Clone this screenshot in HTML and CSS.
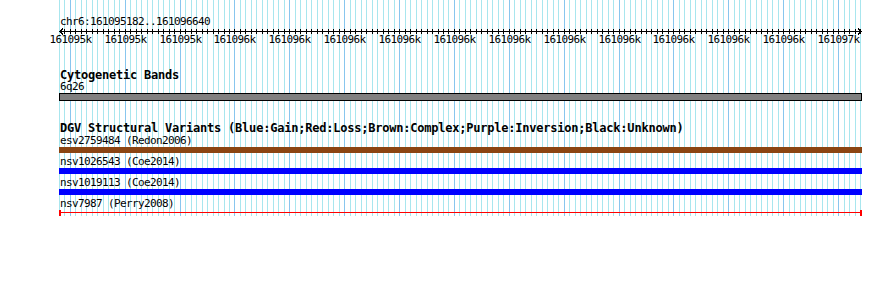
FILE: index.html
```html
<!DOCTYPE html>
<html lang="en">
<head>
    <meta charset="UTF-8">
    <title>chr6:161095182..161096640</title>
    <link rel="stylesheet" href="styles.css">
</head>
<body>

<div class="panel">
    <svg class="grid" id="grid" width="890" height="222"></svg>

    <div class="locus">chr6:161095182..161096640</div>
    <svg class="ruler" id="ruler" width="890" height="20"></svg>

    <!-- Cytogenetic bands -->
    <div class="track">
        <div class="track-title">Cytogenetic Bands</div>
        <div class="feat-label">6q26</div>
        <div class="bar band"></div>
    </div>

    <!-- DGV -->
    <div class="track dgv">
        <div class="track-title">DGV Structural Variants (Blue:Gain;Red:Loss;Brown:Complex;Purple:Inversion;Black:Unknown)</div>
        <div class="feature">
            <div class="feat-label">esv2759484 (Redon2006)</div>
            <div class="bar complex"></div>
        </div>
        <div class="feature">
            <div class="feat-label">nsv1026543 (Coe2014)</div>
            <div class="bar gain"></div>
        </div>
        <div class="feature">
            <div class="feat-label">nsv1019113 (Coe2014)</div>
            <div class="bar gain"></div>
        </div>
        <div class="feature">
            <div class="feat-label">nsv7987 (Perry2008)</div>
            <div class="bar loss"></div>
        </div>
    </div>
</div>

<script>
    const start = 161095182;
    const end = 161096640;
    const ns = 'http://www.w3.org/2000/svg';
    const grid = document.getElementById('grid');
    const ruler = document.getElementById('ruler');

    const pos = (p) => Math.round(60 + (p - start) * 0.5487);

    function add(parent, tag, attrs, text) {
        const el = document.createElementNS(ns, tag);
        for (const k in attrs) el.setAttribute(k, attrs[k]);
        if (text) el.textContent = text;
        parent.appendChild(el);
        return el;
    }

    // grid lines, every 10bp, darker every 100bp
    for (let p = 161095180; p <= end; p += 10) {
        const x = pos(p) + 0.5;
        add(grid, 'line', { x1: x, y1: 0, x2: x, y2: 222, class: p % 100 === 0 ? 'major' : 'minor' });
    }

    // ruler
    add(ruler, 'line', { x1: 60, y1: 4.5, x2: 861, y2: 4.5, class: 'axis' });
    add(ruler, 'polyline', { points: '63,1.5 60,4.5 63,7.5', class: 'axis' });
    add(ruler, 'polyline', { points: '858,1.5 861,4.5 858,7.5', class: 'axis' });

    for (let p = 161095190; p <= end; p += 10) {
        const x = pos(p) + 0.5;
        add(ruler, 'line', { x1: x, y1: 2, x2: x, y2: 7, class: 'axis' });
        if (p % 100 === 0) {
            let k = Math.round(p / 1000);
            if (p % 1000 === 500 && k % 2) k -= 1;
            add(ruler, 'text', { x: x, y: 16, class: 'tick-label' }, k + 'k');
        }
    }
</script>

</body>
</html>
```

FILE: styles.css
```css
body {
    margin: 0;
    background: #fff;
    color: #000;
    font-family: "DejaVu Sans Mono", "Liberation Mono", monospace;
}
.panel {
    position: relative;
    z-index: 0;
    width: 890px;
    padding-top: 16px;
}
.grid {
    position: absolute;
    top: 0;
    left: 0;
    z-index: -1;
    shape-rendering: crispEdges;
}
.grid .minor {
    stroke: #a8e6ee;
    stroke-width: 1;
}
.grid .major {
    stroke: #88c6ee;
    stroke-width: 1;
}
.locus, .feat-label {
    height: 11px;
    padding-left: 60px;
    font-size: 11px;
    line-height: 11px;
    letter-spacing: -0.62px;
    white-space: nowrap;
}
.ruler {
    display: block;
    shape-rendering: crispEdges;
}
.ruler .axis {
    stroke: #000;
    stroke-width: 1;
    fill: none;
}
.tick-label {
    font-family: "DejaVu Sans Mono", "Liberation Mono", monospace;
    font-size: 11px;
    letter-spacing: -0.62px;
    text-anchor: middle;
    fill: #000;
}
.track {
    margin-top: 22px;
}
.track.dgv {
    margin-top: 21px;
}
.track-title {
    height: 12px;
    padding-left: 60px;
    font-size: 12px;
    font-weight: bold;
    line-height: 12px;
    letter-spacing: -0.22px;
    white-space: nowrap;
}
.feature {
    padding-top: 1px;
}
.feature + .feature {
    margin-top: 2px;
}
.bar {
    box-sizing: border-box;
    width: 803px;
    height: 6px;
    margin-top: 1px;
    margin-left: 59px;
}
.band {
    height: 8px;
    border: 1px solid #000;
    background-color: #808080;
}
.complex {
    background-color: #8b4513;
}
.gain {
    background-color: #0000ff;
}
.loss {
    border-left: 2px solid #ff0000;
    border-right: 2px solid #ff0000;
    background: linear-gradient(#ff0000, #ff0000) 0 2px / 100% 1px no-repeat;
}
```
